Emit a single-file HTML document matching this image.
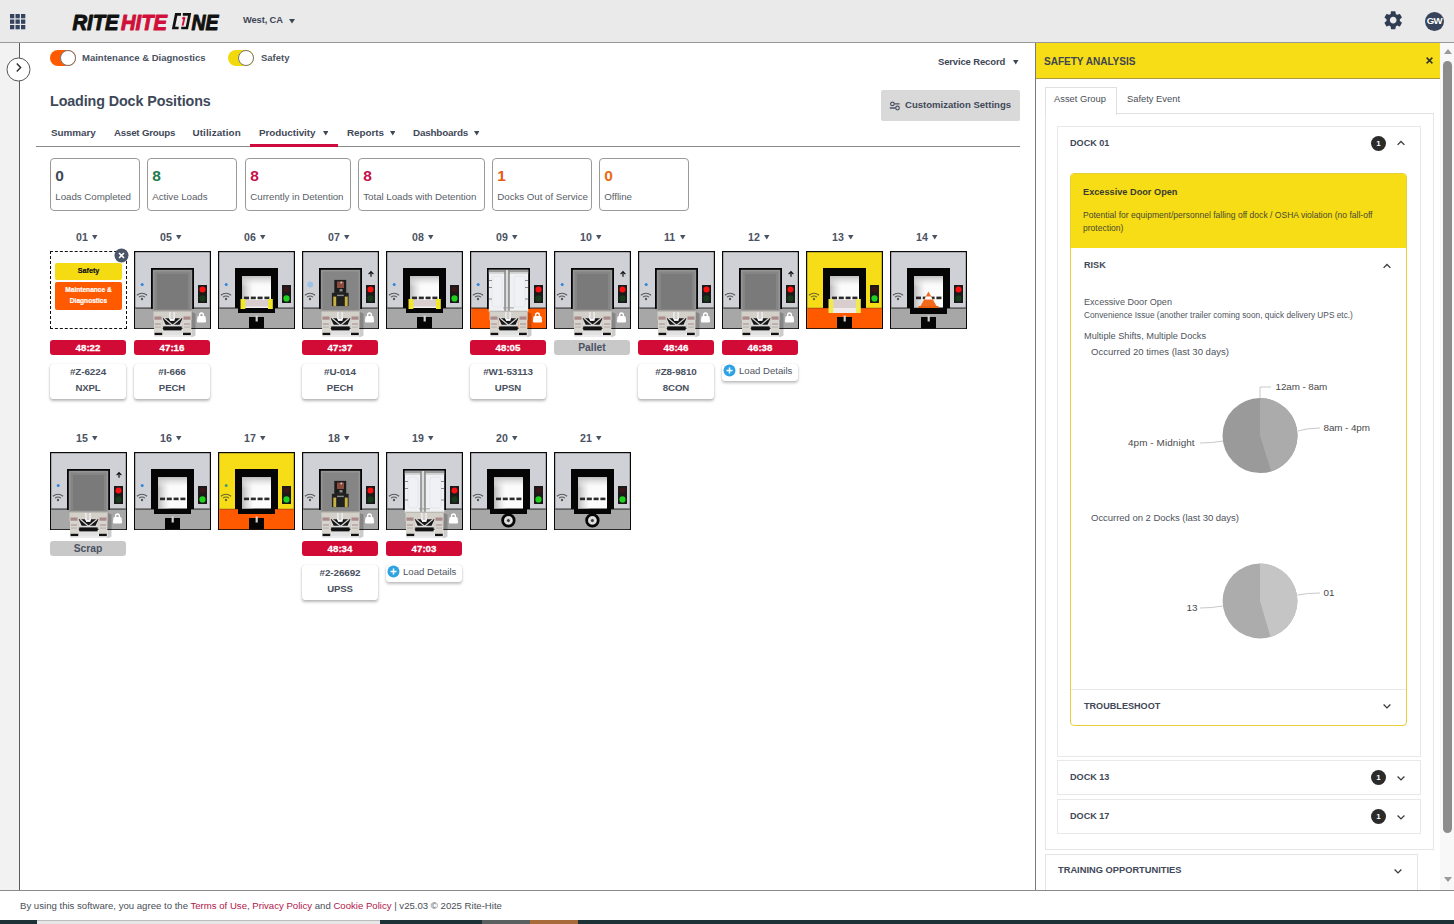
<!DOCTYPE html>
<html><head><meta charset="utf-8"><style>
html,body{margin:0;padding:0;width:1454px;height:924px;overflow:hidden;background:#fff;font-family:"Liberation Sans",sans-serif}
.a{position:absolute;box-sizing:content-box}
.t{position:absolute;white-space:nowrap;line-height:1.2}
svg.a{display:block}
</style></head><body>
<svg width="0" height="0" style="position:absolute"><defs>
<linearGradient id="gL" x1="0" y1="0" x2="1" y2="0"><stop offset="0" stop-color="#b8b8b8"/><stop offset="0.3" stop-color="#e8e8e8" stop-opacity="0.6"/><stop offset="0.45" stop-color="#fff" stop-opacity="0"/></linearGradient>
<linearGradient id="gT" x1="0" y1="0" x2="0" y2="1"><stop offset="0" stop-color="#bdbdbd"/><stop offset="0.2" stop-color="#e0e0e0" stop-opacity="0.5"/><stop offset="0.35" stop-color="#fff" stop-opacity="0"/></linearGradient>
</defs></svg>
<div class="a" style="left:0;top:0;width:1454px;height:42px;background:#eaeaea;border-bottom:1px solid #999"></div>
<svg class="a" style="left:10px;top:14px" width="16" height="16"><rect x="0.0" y="0.0" width="4.3" height="4.3" fill="#34445e"/><rect x="0.0" y="5.5" width="4.3" height="4.3" fill="#34445e"/><rect x="0.0" y="11.0" width="4.3" height="4.3" fill="#34445e"/><rect x="5.5" y="0.0" width="4.3" height="4.3" fill="#34445e"/><rect x="5.5" y="5.5" width="4.3" height="4.3" fill="#34445e"/><rect x="5.5" y="11.0" width="4.3" height="4.3" fill="#34445e"/><rect x="11.0" y="0.0" width="4.3" height="4.3" fill="#34445e"/><rect x="11.0" y="5.5" width="4.3" height="4.3" fill="#34445e"/><rect x="11.0" y="11.0" width="4.3" height="4.3" fill="#34445e"/></svg>
<svg class="a" style="left:72px;top:10.8px" width="150" height="21" viewBox="0 0 150 21">
<g stroke-width="1.1" stroke-linejoin="round">
<text x="0.5" y="18.6" font-family="Liberation Sans" font-weight="700" font-style="italic" font-size="22.5" fill="#111" stroke="#111" textLength="46" lengthAdjust="spacingAndGlyphs">RITE</text>
<text x="49" y="18.6" font-family="Liberation Sans" font-weight="700" font-style="italic" font-size="22.5" fill="#d0103a" stroke="#d0103a" textLength="46" lengthAdjust="spacingAndGlyphs">HITE</text>
<text x="119.5" y="18.6" font-family="Liberation Sans" font-weight="700" font-style="italic" font-size="22.5" fill="#111" stroke="#111" textLength="27" lengthAdjust="spacingAndGlyphs">NE</text>
</g>
<path d="M109 3.4H104.2L101.5 17H106.6M110.8 3.4H117.6L114.9 17H109.2" stroke="#111" stroke-width="2.7" fill="none" stroke-linejoin="miter"/>
<path d="M112.6 6.2L110.6 14.6M112.6 6.2L110.2 7.8" stroke="#d0103a" stroke-width="1.9" fill="none"/>
</svg>
<div class="t" style="left:243px;top:15.42px;font-size:9.3px;font-weight:700;color:#3d4656;letter-spacing:-0.1px;">West, CA</div>
<svg class="a" style="left:289px;top:19px" width="6" height="4.5"><path d="M0 0H6L3.0 4.5Z" fill="#3d4656"/></svg>
<svg class="a" style="left:1382.4px;top:8.8px" width="22.4" height="22.4" viewBox="0 0 24 24"><path fill="#2f3c52" d="M19.14 12.94c.04-.3.06-.61.06-.94 0-.32-.02-.64-.07-.94l2.03-1.58a.49.49 0 0 0 .12-.61l-1.92-3.32a.488.488 0 0 0-.59-.22l-2.39.96c-.5-.38-1.03-.7-1.62-.94l-.36-2.54a.484.484 0 0 0-.48-.41h-3.84c-.24 0-.43.17-.47.41l-.36 2.54c-.59.24-1.13.57-1.62.94l-2.39-.96c-.22-.08-.47 0-.59.22L2.74 8.87c-.12.21-.08.47.12.61l2.03 1.58c-.05.3-.09.63-.09.94s.02.64.07.94l-2.03 1.58a.49.49 0 0 0-.12.61l1.92 3.32c.12.22.37.29.59.22l2.39-.96c.5.38 1.03.7 1.62.94l.36 2.54c.05.24.24.41.48.41h3.84c.24 0 .44-.17.47-.41l.36-2.54c.59-.24 1.13-.56 1.62-.94l2.39.96c.22.08.47 0 .59-.22l1.92-3.32c.12-.22.07-.47-.12-.61l-2.01-1.58zM12 15.6c-1.98 0-3.6-1.62-3.6-3.6s1.62-3.6 3.6-3.6 3.6 1.62 3.6 3.6-1.62 3.6-3.6 3.6z"/></svg>
<div class="a" style="left:1425px;top:11.5px;width:19px;height:19px;border-radius:50%;background:#36435a;color:#fff;font-size:9.6px;font-weight:700;line-height:17px;text-align:center;letter-spacing:-0.7px;text-indent:-0.5px">GW</div>
<div class="a" style="left:0;top:43px;width:19px;height:847px;background:#f2f2f2;border-right:1px solid #5a5a5a"></div>
<svg class="a" style="left:6px;top:57px" width="25" height="25"><circle cx="12.5" cy="12.5" r="11.5" fill="#fff" stroke="#555" stroke-width="1"/><path d="M10.8 6.6L14.6 10.6L10.8 14.6" stroke="#333" stroke-width="1.5" fill="none"/></svg>
<div class="a" style="left:50px;top:50px;width:26px;height:16px;border-radius:8px;background:#ff5a00"></div>
<div class="a" style="left:60px;top:50px;width:14px;height:14px;border-radius:50%;background:#fff;border:1px solid #777"></div>
<div class="t" style="left:82px;top:52.30px;font-size:9.5px;font-weight:700;color:#4a5262;letter-spacing:0px;">Maintenance &amp; Diagnostics</div>
<div class="a" style="left:228px;top:50px;width:26px;height:16px;border-radius:8px;background:#f2d90c"></div>
<div class="a" style="left:238px;top:50px;width:14px;height:14px;border-radius:50%;background:#fff;border:1px solid #777"></div>
<div class="t" style="left:261px;top:52.30px;font-size:9.5px;font-weight:700;color:#4a5262;letter-spacing:0px;">Safety</div>
<div class="t" style="left:938px;top:56.30px;font-size:9.5px;font-weight:700;color:#3d4656;letter-spacing:-0.15px;">Service Record</div>
<svg class="a" style="left:1013px;top:60px" width="5.5" height="4.5"><path d="M0 0H5.5L2.75 4.5Z" fill="#3d4656"/></svg>
<div class="a" style="left:881px;top:90px;width:139px;height:31px;background:#d9d9d9;border-radius:2px"></div>
<svg class="a" style="left:888px;top:100px" width="13" height="11"><path d="M6.3 3.9H11.6M1.8 8H7.6" stroke="#4a5262" stroke-width="1.3"/><circle cx="4.4" cy="3.9" r="1.8" fill="none" stroke="#4a5262" stroke-width="1.2"/><circle cx="9.5" cy="8" r="1.8" fill="none" stroke="#4a5262" stroke-width="1.2"/></svg>
<div class="t" style="left:905px;top:99.27px;font-size:9.55px;font-weight:700;color:#3f4858;letter-spacing:0px;">Customization Settings</div>
<div class="t" style="left:50px;top:93.42px;font-size:14.3px;font-weight:700;color:#3e4859;letter-spacing:-0.1px;">Loading Dock Positions</div>
<div class="t" style="left:51px;top:127.06px;font-size:9.9px;font-weight:700;color:#3f4858;letter-spacing:-0.05px;">Summary</div>
<div class="t" style="left:114px;top:127.18px;font-size:9.7px;font-weight:700;color:#3f4858;letter-spacing:-0.2px;">Asset Groups</div>
<div class="t" style="left:192.5px;top:127.06px;font-size:9.9px;font-weight:700;color:#3f4858;letter-spacing:0.1px;">Utilization</div>
<div class="t" style="left:259px;top:127.06px;font-size:9.9px;font-weight:700;color:#3f4858;letter-spacing:-0.05px;">Productivity</div>
<div class="t" style="left:347px;top:127.06px;font-size:9.9px;font-weight:700;color:#3f4858;letter-spacing:-0.05px;">Reports</div>
<div class="t" style="left:413px;top:127.06px;font-size:9.9px;font-weight:700;color:#3f4858;letter-spacing:-0.2px;">Dashboards</div>
<svg class="a" style="left:322.5px;top:131px" width="5.5" height="4.5"><path d="M0 0H5.5L2.75 4.5Z" fill="#3f4858"/></svg>
<svg class="a" style="left:389.5px;top:131px" width="5.5" height="4.5"><path d="M0 0H5.5L2.75 4.5Z" fill="#3f4858"/></svg>
<svg class="a" style="left:473.5px;top:131px" width="5.5" height="4.5"><path d="M0 0H5.5L2.75 4.5Z" fill="#3f4858"/></svg>
<div class="a" style="left:36px;top:146px;width:984px;height:1px;background:#8a8a8a"></div>
<div class="a" style="left:250px;top:144px;width:88px;height:3px;background:#cf0a3c"></div>
<div class="a" style="left:50px;top:158px;width:88px;height:51px;border:1px solid #9a9a9a;border-radius:4px;background:#fff"></div>
<div class="t" style="left:55.3px;top:167.20px;font-size:15.5px;font-weight:700;color:#3e4859;letter-spacing:0px;">0</div>
<div class="t" style="left:55.3px;top:191.15px;font-size:9.75px;font-weight:400;color:#5a5f68;letter-spacing:-0.05px;">Loads Completed</div>
<div class="a" style="left:147px;top:158px;width:88px;height:51px;border:1px solid #9a9a9a;border-radius:4px;background:#fff"></div>
<div class="t" style="left:152.3px;top:167.20px;font-size:15.5px;font-weight:700;color:#1e7a4c;letter-spacing:0px;">8</div>
<div class="t" style="left:152.3px;top:191.15px;font-size:9.75px;font-weight:400;color:#5a5f68;letter-spacing:-0.05px;">Active Loads</div>
<div class="a" style="left:245px;top:158px;width:104px;height:51px;border:1px solid #9a9a9a;border-radius:4px;background:#fff"></div>
<div class="t" style="left:250.3px;top:167.20px;font-size:15.5px;font-weight:700;color:#c8104a;letter-spacing:0px;">8</div>
<div class="t" style="left:250.3px;top:191.15px;font-size:9.75px;font-weight:400;color:#5a5f68;letter-spacing:-0.05px;">Currently in Detention</div>
<div class="a" style="left:358px;top:158px;width:125px;height:51px;border:1px solid #9a9a9a;border-radius:4px;background:#fff"></div>
<div class="t" style="left:363.3px;top:167.20px;font-size:15.5px;font-weight:700;color:#c8104a;letter-spacing:0px;">8</div>
<div class="t" style="left:363.3px;top:191.15px;font-size:9.75px;font-weight:400;color:#5a5f68;letter-spacing:-0.05px;">Total Loads with Detention</div>
<div class="a" style="left:492px;top:158px;width:98px;height:51px;border:1px solid #9a9a9a;border-radius:4px;background:#fff"></div>
<div class="t" style="left:497.3px;top:167.20px;font-size:15.5px;font-weight:700;color:#e85a10;letter-spacing:0px;">1</div>
<div class="t" style="left:497.3px;top:191.15px;font-size:9.75px;font-weight:400;color:#5a5f68;letter-spacing:-0.05px;">Docks Out of Service</div>
<div class="a" style="left:599px;top:158px;width:88px;height:51px;border:1px solid #9a9a9a;border-radius:4px;background:#fff"></div>
<div class="t" style="left:604.3px;top:167.20px;font-size:15.5px;font-weight:700;color:#ea6a12;letter-spacing:0px;">0</div>
<div class="t" style="left:604.3px;top:191.15px;font-size:9.75px;font-weight:400;color:#5a5f68;letter-spacing:-0.05px;">Offline</div>
<div class="t" style="left:76.0px;top:230.64px;font-size:10.6px;font-weight:700;color:#4a5262;letter-spacing:0px;">01</div><svg class="a" style="left:92.0px;top:235px" width="5.5" height="4.5"><path d="M0 0H5.5L2.75 4.5Z" fill="#4a5262"/></svg>
<div class="t" style="left:160.0px;top:230.64px;font-size:10.6px;font-weight:700;color:#4a5262;letter-spacing:0px;">05</div><svg class="a" style="left:176.0px;top:235px" width="5.5" height="4.5"><path d="M0 0H5.5L2.75 4.5Z" fill="#4a5262"/></svg>
<div class="t" style="left:244.0px;top:230.64px;font-size:10.6px;font-weight:700;color:#4a5262;letter-spacing:0px;">06</div><svg class="a" style="left:260.0px;top:235px" width="5.5" height="4.5"><path d="M0 0H5.5L2.75 4.5Z" fill="#4a5262"/></svg>
<div class="t" style="left:328.0px;top:230.64px;font-size:10.6px;font-weight:700;color:#4a5262;letter-spacing:0px;">07</div><svg class="a" style="left:344.0px;top:235px" width="5.5" height="4.5"><path d="M0 0H5.5L2.75 4.5Z" fill="#4a5262"/></svg>
<div class="t" style="left:412.0px;top:230.64px;font-size:10.6px;font-weight:700;color:#4a5262;letter-spacing:0px;">08</div><svg class="a" style="left:428.0px;top:235px" width="5.5" height="4.5"><path d="M0 0H5.5L2.75 4.5Z" fill="#4a5262"/></svg>
<div class="t" style="left:496.0px;top:230.64px;font-size:10.6px;font-weight:700;color:#4a5262;letter-spacing:0px;">09</div><svg class="a" style="left:512.0px;top:235px" width="5.5" height="4.5"><path d="M0 0H5.5L2.75 4.5Z" fill="#4a5262"/></svg>
<div class="t" style="left:580.0px;top:230.64px;font-size:10.6px;font-weight:700;color:#4a5262;letter-spacing:0px;">10</div><svg class="a" style="left:596.0px;top:235px" width="5.5" height="4.5"><path d="M0 0H5.5L2.75 4.5Z" fill="#4a5262"/></svg>
<div class="t" style="left:664.0px;top:230.64px;font-size:10.6px;font-weight:700;color:#4a5262;letter-spacing:0px;">11</div><svg class="a" style="left:680.0px;top:235px" width="5.5" height="4.5"><path d="M0 0H5.5L2.75 4.5Z" fill="#4a5262"/></svg>
<div class="t" style="left:748.0px;top:230.64px;font-size:10.6px;font-weight:700;color:#4a5262;letter-spacing:0px;">12</div><svg class="a" style="left:764.0px;top:235px" width="5.5" height="4.5"><path d="M0 0H5.5L2.75 4.5Z" fill="#4a5262"/></svg>
<div class="t" style="left:832.0px;top:230.64px;font-size:10.6px;font-weight:700;color:#4a5262;letter-spacing:0px;">13</div><svg class="a" style="left:848.0px;top:235px" width="5.5" height="4.5"><path d="M0 0H5.5L2.75 4.5Z" fill="#4a5262"/></svg>
<div class="t" style="left:916.0px;top:230.64px;font-size:10.6px;font-weight:700;color:#4a5262;letter-spacing:0px;">14</div><svg class="a" style="left:932.0px;top:235px" width="5.5" height="4.5"><path d="M0 0H5.5L2.75 4.5Z" fill="#4a5262"/></svg>
<div class="t" style="left:76.0px;top:431.64px;font-size:10.6px;font-weight:700;color:#4a5262;letter-spacing:0px;">15</div><svg class="a" style="left:92.0px;top:436px" width="5.5" height="4.5"><path d="M0 0H5.5L2.75 4.5Z" fill="#4a5262"/></svg>
<div class="t" style="left:160.0px;top:431.64px;font-size:10.6px;font-weight:700;color:#4a5262;letter-spacing:0px;">16</div><svg class="a" style="left:176.0px;top:436px" width="5.5" height="4.5"><path d="M0 0H5.5L2.75 4.5Z" fill="#4a5262"/></svg>
<div class="t" style="left:244.0px;top:431.64px;font-size:10.6px;font-weight:700;color:#4a5262;letter-spacing:0px;">17</div><svg class="a" style="left:260.0px;top:436px" width="5.5" height="4.5"><path d="M0 0H5.5L2.75 4.5Z" fill="#4a5262"/></svg>
<div class="t" style="left:328.0px;top:431.64px;font-size:10.6px;font-weight:700;color:#4a5262;letter-spacing:0px;">18</div><svg class="a" style="left:344.0px;top:436px" width="5.5" height="4.5"><path d="M0 0H5.5L2.75 4.5Z" fill="#4a5262"/></svg>
<div class="t" style="left:412.0px;top:431.64px;font-size:10.6px;font-weight:700;color:#4a5262;letter-spacing:0px;">19</div><svg class="a" style="left:428.0px;top:436px" width="5.5" height="4.5"><path d="M0 0H5.5L2.75 4.5Z" fill="#4a5262"/></svg>
<div class="t" style="left:496.0px;top:431.64px;font-size:10.6px;font-weight:700;color:#4a5262;letter-spacing:0px;">20</div><svg class="a" style="left:512.0px;top:436px" width="5.5" height="4.5"><path d="M0 0H5.5L2.75 4.5Z" fill="#4a5262"/></svg>
<div class="t" style="left:580.0px;top:431.64px;font-size:10.6px;font-weight:700;color:#4a5262;letter-spacing:0px;">21</div><svg class="a" style="left:596.0px;top:436px" width="5.5" height="4.5"><path d="M0 0H5.5L2.75 4.5Z" fill="#4a5262"/></svg>
<div class="a" style="left:50px;top:251px;width:75px;height:76px;border:1.3px dashed #111;background:#fff"></div>
<div class="a" style="left:55px;top:263px;width:67px;height:17px;border-radius:2px;background:#f5dc12;color:#111;font-size:7.2px;font-weight:700;text-align:center;line-height:16px;-webkit-text-stroke:0.2px #111">Safety</div>
<div class="a" style="left:55px;top:282px;width:67px;height:28px;border-radius:2px;background:#ff5a00;color:#fff;font-size:6.6px;font-weight:700;text-align:center;line-height:11px;padding-top:2.3px;box-sizing:border-box;-webkit-text-stroke:0.2px #fff">Maintenance &amp;<br>Diagnostics</div>
<svg class="a" style="left:114px;top:248px" width="15" height="15"><circle cx="7.5" cy="7.5" r="7" fill="#4b5568"/><path d="M5 5L10 10M10 5L5 10" stroke="#fff" stroke-width="1.6"/></svg>
<svg class="a" style="left:134px;top:251px;overflow:visible" width="77" height="78" viewBox="0 0 77 78"><rect x="0.6" y="0.6" width="75.8" height="76.8" fill="#cfd1d6" stroke="#0a0a0a" stroke-width="1.2"/><rect x="1.2" y="57" width="74.6" height="20.2" fill="#a7a7a7"/><rect x="1.2" y="56.5" width="74.6" height="1.1" fill="#1a1a1a" opacity="0.85"/><circle cx="8.2" cy="33.5" r="1.5" fill="#2f86dd"/><path d="M2.9 44.3 Q8 40.2 13.1 44.3" stroke="#5a5a5a" stroke-width="1.1" fill="none"/><path d="M5 46.2 Q8 43.7 11 46.2" stroke="#5a5a5a" stroke-width="1.1" fill="none"/><circle cx="8" cy="48" r="1.2" fill="#5a5a5a"/><rect x="64" y="34" width="9" height="18" fill="#1a1a1a"/><circle cx="68.5" cy="38.6" r="3" fill="#ff1010"/><circle cx="68.5" cy="47.4" r="3.1" fill="#173a1a"/><path d="M65.6 65.5V64.3Q65.6 62 67.5 62Q69.4 62 69.4 64.3V65.5" stroke="#fff" stroke-width="1.4" fill="none"/><path d="M64.6 65H70.4Q71.4 65 71.6 66.2L72.1 70Q72.2 71.6 70.6 71.6H64.4Q62.8 71.6 62.9 70L63.4 66.2Q63.6 65 64.6 65Z" fill="#fff"/><rect x="17" y="17" width="43" height="41" fill="#050505"/><rect x="18.8" y="18.8" width="39.4" height="42" fill="#959595"/><rect x="20.5" y="20.5" width="36" height="39" fill="#858585"/><rect x="23" y="23" width="31" height="35" fill="#7a7a7a"/><rect x="19.5" y="59.8" width="38.2" height="9.5" fill="#d3cfc9"/><rect x="19.5" y="59.8" width="38.2" height="1.2" fill="#bdbab5"/><rect x="20.5" y="65.5" width="7" height="3.2" fill="#9e7474" opacity="0.75"/><rect x="49.5" y="65.5" width="7" height="3.2" fill="#9e7474" opacity="0.75"/><rect x="20" y="69" width="8.7" height="13" fill="#d8d4ce"/><rect x="48.5" y="69" width="8.8" height="13" fill="#d8d4ce"/><rect x="21" y="72" width="6" height="2" fill="#b0a0a0" opacity="0.7"/><rect x="50" y="72" width="6" height="2" fill="#b0a0a0" opacity="0.7"/><rect x="21" y="75.5" width="6" height="1.2" fill="#a8a0a0" opacity="0.6"/><rect x="50" y="75.5" width="6" height="1.2" fill="#a8a0a0" opacity="0.6"/><rect x="28.7" y="79.4" width="19.8" height="4.5" fill="#bdbdbd" opacity="0.45"/><rect x="28.7" y="67" width="19.8" height="9" fill="#dadada"/><path d="M28.7 67.2H48.5L45.5 73.8H31.7Z" fill="#161616"/><path d="M30.2 67.2L38.6 74.2L47 67.2" stroke="#d8d8d8" stroke-width="1.2" fill="none"/><rect x="29.2" y="75.4" width="18.4" height="4" fill="#121212"/><rect x="35" y="61" width="1.7" height="7.5" fill="#eaeaea"/><rect x="39.3" y="61" width="1.7" height="7.5" fill="#eaeaea"/><rect x="36" y="67.3" width="4.5" height="2.6" fill="#fbfbfb"/><rect x="20.5" y="81.8" width="7.8" height="2.3" fill="#111"/><rect x="49" y="81.8" width="7.8" height="2.3" fill="#111"/><path d="M57.7 61L61.5 62.5V84.5L57.5 86.5Z" fill="#000" opacity="0.2"/><rect x="20" y="84" width="38" height="2" fill="#000" opacity="0.08"/></svg>
<svg class="a" style="left:218px;top:251px;overflow:visible" width="77" height="78" viewBox="0 0 77 78"><rect x="0.6" y="0.6" width="75.8" height="76.8" fill="#cfd1d6" stroke="#0a0a0a" stroke-width="1.2"/><rect x="1.2" y="57" width="74.6" height="20.2" fill="#a7a7a7"/><rect x="1.2" y="56.5" width="74.6" height="1.1" fill="#1a1a1a" opacity="0.85"/><circle cx="8.2" cy="33.5" r="1.5" fill="#2f86dd"/><path d="M2.9 44.3 Q8 40.2 13.1 44.3" stroke="#5a5a5a" stroke-width="1.1" fill="none"/><path d="M5 46.2 Q8 43.7 11 46.2" stroke="#5a5a5a" stroke-width="1.1" fill="none"/><circle cx="8" cy="48" r="1.2" fill="#5a5a5a"/><rect x="64" y="34" width="9" height="18" fill="#1a1a1a"/><circle cx="68.5" cy="38.6" r="3" fill="#3a1515"/><circle cx="68.5" cy="47.4" r="3.1" fill="#1ed21e"/><path d="M17 17H60V57H57V62H20V57H17Z" fill="#050505"/><rect x="24" y="25" width="29" height="31.5" fill="#fbfbfb"/><rect x="24" y="25" width="29" height="31.5" fill="url(#gL)"/><rect x="24" y="25" width="29" height="31.5" fill="url(#gT)"/><rect x="26" y="45.6" width="5" height="2.6" fill="#2a2a2a"/><rect x="32.8" y="45.6" width="5" height="2.6" fill="#2a2a2a"/><rect x="39.6" y="45.6" width="5" height="2.6" fill="#2a2a2a"/><rect x="46.4" y="45.6" width="5" height="2.6" fill="#2a2a2a"/><rect x="25" y="49" width="28" height="7.5" fill="#d9cdcd"/><rect x="25" y="55.5" width="28" height="1.5" fill="#f4eeee"/><rect x="22.5" y="48" width="4.8" height="10" fill="#f2e62a"/><rect x="50" y="48" width="4.8" height="10" fill="#f2e62a"/><rect x="31" y="66" width="15" height="11.5" fill="#050505"/><rect x="37.6" y="64.5" width="2.2" height="6" fill="#cfcfcf"/></svg>
<svg class="a" style="left:302px;top:251px;overflow:visible" width="77" height="78" viewBox="0 0 77 78"><rect x="0.6" y="0.6" width="75.8" height="76.8" fill="#cfd1d6" stroke="#0a0a0a" stroke-width="1.2"/><rect x="1.2" y="57" width="74.6" height="20.2" fill="#a7a7a7"/><rect x="1.2" y="56.5" width="74.6" height="1.1" fill="#1a1a1a" opacity="0.85"/><circle cx="8.2" cy="33.5" r="3" fill="#9fc3e6"/><path d="M2.9 44.3 Q8 40.2 13.1 44.3" stroke="#5a5a5a" stroke-width="1.1" fill="none"/><path d="M5 46.2 Q8 43.7 11 46.2" stroke="#5a5a5a" stroke-width="1.1" fill="none"/><circle cx="8" cy="48" r="1.2" fill="#5a5a5a"/><rect x="64" y="34" width="9" height="18" fill="#1a1a1a"/><circle cx="68.5" cy="38.6" r="3" fill="#ff1010"/><circle cx="68.5" cy="47.4" r="3.1" fill="#173a1a"/><path d="M69 25.8V20.6M66.6 23.2L69 20.6L71.4 23.2" stroke="#111" stroke-width="1.2" fill="none"/><path d="M65.6 65.5V64.3Q65.6 62 67.5 62Q69.4 62 69.4 64.3V65.5" stroke="#fff" stroke-width="1.4" fill="none"/><path d="M64.6 65H70.4Q71.4 65 71.6 66.2L72.1 70Q72.2 71.6 70.6 71.6H64.4Q62.8 71.6 62.9 70L63.4 66.2Q63.6 65 64.6 65Z" fill="#fff"/><rect x="17" y="17" width="43" height="41" fill="#050505"/><rect x="18.8" y="18.8" width="39.4" height="42" fill="#959595"/><rect x="20.5" y="20.5" width="36" height="39" fill="#858585"/><rect x="23" y="23" width="31" height="35" fill="#7a7a7a"/><rect x="23" y="23" width="31" height="35" fill="#858585"/><rect x="32.3" y="28.9" width="11.9" height="13" fill="#1c1c1c"/><rect x="35" y="30.5" width="7" height="6.5" fill="#8a4a3c"/><circle cx="39.3" cy="31.5" r="1" fill="#d8c8c0"/><rect x="37.5" y="38" width="3" height="2.5" fill="#8a8a80"/><rect x="29.9" y="41.8" width="16.7" height="13.3" fill="#202020"/><rect x="35" y="43.7" width="6.8" height="1.4" fill="#8a8a8a"/><rect x="31.3" y="45.6" width="2.9" height="9.5" fill="#c8b040"/><rect x="42.8" y="45.6" width="2.9" height="9.5" fill="#c8b040"/><rect x="19.5" y="59.8" width="38.2" height="9.5" fill="#d3cfc9"/><rect x="19.5" y="59.8" width="38.2" height="1.2" fill="#bdbab5"/><rect x="20.5" y="65.5" width="7" height="3.2" fill="#9e7474" opacity="0.75"/><rect x="49.5" y="65.5" width="7" height="3.2" fill="#9e7474" opacity="0.75"/><rect x="20" y="69" width="8.7" height="13" fill="#d8d4ce"/><rect x="48.5" y="69" width="8.8" height="13" fill="#d8d4ce"/><rect x="21" y="72" width="6" height="2" fill="#b0a0a0" opacity="0.7"/><rect x="50" y="72" width="6" height="2" fill="#b0a0a0" opacity="0.7"/><rect x="21" y="75.5" width="6" height="1.2" fill="#a8a0a0" opacity="0.6"/><rect x="50" y="75.5" width="6" height="1.2" fill="#a8a0a0" opacity="0.6"/><rect x="28.7" y="79.4" width="19.8" height="4.5" fill="#bdbdbd" opacity="0.45"/><rect x="28.7" y="67" width="19.8" height="9" fill="#dadada"/><path d="M28.7 67.2H48.5L45.5 73.8H31.7Z" fill="#161616"/><path d="M30.2 67.2L38.6 74.2L47 67.2" stroke="#d8d8d8" stroke-width="1.2" fill="none"/><rect x="29.2" y="75.4" width="18.4" height="4" fill="#121212"/><rect x="35" y="61" width="1.7" height="7.5" fill="#eaeaea"/><rect x="39.3" y="61" width="1.7" height="7.5" fill="#eaeaea"/><rect x="36" y="67.3" width="4.5" height="2.6" fill="#fbfbfb"/><rect x="20.5" y="81.8" width="7.8" height="2.3" fill="#111"/><rect x="49" y="81.8" width="7.8" height="2.3" fill="#111"/><path d="M57.7 61L61.5 62.5V84.5L57.5 86.5Z" fill="#000" opacity="0.2"/><rect x="20" y="84" width="38" height="2" fill="#000" opacity="0.08"/></svg>
<svg class="a" style="left:386px;top:251px;overflow:visible" width="77" height="78" viewBox="0 0 77 78"><rect x="0.6" y="0.6" width="75.8" height="76.8" fill="#cfd1d6" stroke="#0a0a0a" stroke-width="1.2"/><rect x="1.2" y="57" width="74.6" height="20.2" fill="#a7a7a7"/><rect x="1.2" y="56.5" width="74.6" height="1.1" fill="#1a1a1a" opacity="0.85"/><circle cx="8.2" cy="33.5" r="1.5" fill="#2f86dd"/><path d="M2.9 44.3 Q8 40.2 13.1 44.3" stroke="#5a5a5a" stroke-width="1.1" fill="none"/><path d="M5 46.2 Q8 43.7 11 46.2" stroke="#5a5a5a" stroke-width="1.1" fill="none"/><circle cx="8" cy="48" r="1.2" fill="#5a5a5a"/><rect x="64" y="34" width="9" height="18" fill="#1a1a1a"/><circle cx="68.5" cy="38.6" r="3" fill="#3a1515"/><circle cx="68.5" cy="47.4" r="3.1" fill="#1ed21e"/><path d="M17 17H60V57H57V62H20V57H17Z" fill="#050505"/><rect x="24" y="25" width="29" height="31.5" fill="#fbfbfb"/><rect x="24" y="25" width="29" height="31.5" fill="url(#gL)"/><rect x="24" y="25" width="29" height="31.5" fill="url(#gT)"/><rect x="26" y="45.6" width="5" height="2.6" fill="#2a2a2a"/><rect x="32.8" y="45.6" width="5" height="2.6" fill="#2a2a2a"/><rect x="39.6" y="45.6" width="5" height="2.6" fill="#2a2a2a"/><rect x="46.4" y="45.6" width="5" height="2.6" fill="#2a2a2a"/><rect x="25" y="49" width="28" height="7.5" fill="#d9cdcd"/><rect x="25" y="55.5" width="28" height="1.5" fill="#f4eeee"/><rect x="22.5" y="48" width="4.8" height="10" fill="#f2e62a"/><rect x="50" y="48" width="4.8" height="10" fill="#f2e62a"/><rect x="31" y="66" width="15" height="11.5" fill="#050505"/><rect x="37.6" y="64.5" width="2.2" height="6" fill="#cfcfcf"/></svg>
<svg class="a" style="left:470px;top:251px;overflow:visible" width="77" height="78" viewBox="0 0 77 78"><rect x="0.6" y="0.6" width="75.8" height="76.8" fill="#cfd1d6" stroke="#0a0a0a" stroke-width="1.2"/><rect x="1.2" y="57" width="74.6" height="20.2" fill="#ff5a00"/><rect x="1.2" y="56.5" width="74.6" height="1.1" fill="#1a1a1a" opacity="0.85"/><circle cx="8.2" cy="33.5" r="1.5" fill="#2f86dd"/><path d="M2.9 44.3 Q8 40.2 13.1 44.3" stroke="#5a5a5a" stroke-width="1.1" fill="none"/><path d="M5 46.2 Q8 43.7 11 46.2" stroke="#5a5a5a" stroke-width="1.1" fill="none"/><circle cx="8" cy="48" r="1.2" fill="#5a5a5a"/><rect x="64" y="34" width="9" height="18" fill="#1a1a1a"/><circle cx="68.5" cy="38.6" r="3" fill="#ff1010"/><circle cx="68.5" cy="47.4" r="3.1" fill="#173a1a"/><path d="M65.6 65.5V64.3Q65.6 62 67.5 62Q69.4 62 69.4 64.3V65.5" stroke="#fff" stroke-width="1.4" fill="none"/><path d="M64.6 65H70.4Q71.4 65 71.6 66.2L72.1 70Q72.2 71.6 70.6 71.6H64.4Q62.8 71.6 62.9 70L63.4 66.2Q63.6 65 64.6 65Z" fill="#fff"/><rect x="17" y="17" width="43" height="41" fill="#050505"/><rect x="18.8" y="18.8" width="39.4" height="42" fill="#eff1f4"/><rect x="18.8" y="18.8" width="39.4" height="2.5" fill="#9a9a9a"/><rect x="18.8" y="21.3" width="39.4" height="1.5" fill="#cfcfcf"/><rect x="22" y="25" width="10" height="31" rx="3" fill="none" stroke="#e2e4e8" stroke-width="0.8"/><rect x="44" y="25" width="11" height="31" rx="3" fill="none" stroke="#e2e4e8" stroke-width="0.8"/><rect x="34.2" y="19" width="1.7" height="46" fill="#8c8c8c"/><rect x="35.9" y="19" width="2.2" height="46" fill="#dcdcdc"/><rect x="38.1" y="19" width="1.7" height="46" fill="#8c8c8c"/><rect x="19" y="29" width="3" height="1" fill="#8a8a8a"/><rect x="55" y="29" width="3" height="1" fill="#8a8a8a"/><rect x="19" y="36" width="3" height="1" fill="#8a8a8a"/><rect x="55" y="36" width="3" height="1" fill="#8a8a8a"/><rect x="19" y="47.5" width="3" height="1" fill="#8a8a8a"/><rect x="55" y="47.5" width="3" height="1" fill="#8a8a8a"/><rect x="33" y="56" width="11" height="1.5" fill="#9a9a9a" opacity="0.6"/><rect x="19.5" y="59.8" width="38.2" height="9.5" fill="#d3cfc9"/><rect x="19.5" y="59.8" width="38.2" height="1.2" fill="#bdbab5"/><rect x="20.5" y="65.5" width="7" height="3.2" fill="#9e7474" opacity="0.75"/><rect x="49.5" y="65.5" width="7" height="3.2" fill="#9e7474" opacity="0.75"/><rect x="20" y="69" width="8.7" height="13" fill="#d8d4ce"/><rect x="48.5" y="69" width="8.8" height="13" fill="#d8d4ce"/><rect x="21" y="72" width="6" height="2" fill="#b0a0a0" opacity="0.7"/><rect x="50" y="72" width="6" height="2" fill="#b0a0a0" opacity="0.7"/><rect x="21" y="75.5" width="6" height="1.2" fill="#a8a0a0" opacity="0.6"/><rect x="50" y="75.5" width="6" height="1.2" fill="#a8a0a0" opacity="0.6"/><rect x="28.7" y="79.4" width="19.8" height="4.5" fill="#bdbdbd" opacity="0.45"/><rect x="28.7" y="67" width="19.8" height="9" fill="#dadada"/><path d="M28.7 67.2H48.5L45.5 73.8H31.7Z" fill="#161616"/><path d="M30.2 67.2L38.6 74.2L47 67.2" stroke="#d8d8d8" stroke-width="1.2" fill="none"/><rect x="29.2" y="75.4" width="18.4" height="4" fill="#121212"/><rect x="35" y="61" width="1.7" height="7.5" fill="#eaeaea"/><rect x="39.3" y="61" width="1.7" height="7.5" fill="#eaeaea"/><rect x="36" y="67.3" width="4.5" height="2.6" fill="#fbfbfb"/><rect x="20.5" y="81.8" width="7.8" height="2.3" fill="#111"/><rect x="49" y="81.8" width="7.8" height="2.3" fill="#111"/><path d="M57.7 61L61.5 62.5V84.5L57.5 86.5Z" fill="#000" opacity="0.2"/><rect x="20" y="84" width="38" height="2" fill="#000" opacity="0.08"/></svg>
<svg class="a" style="left:554px;top:251px;overflow:visible" width="77" height="78" viewBox="0 0 77 78"><rect x="0.6" y="0.6" width="75.8" height="76.8" fill="#cfd1d6" stroke="#0a0a0a" stroke-width="1.2"/><rect x="1.2" y="57" width="74.6" height="20.2" fill="#a7a7a7"/><rect x="1.2" y="56.5" width="74.6" height="1.1" fill="#1a1a1a" opacity="0.85"/><circle cx="8.2" cy="33.5" r="1.5" fill="#2f86dd"/><path d="M2.9 44.3 Q8 40.2 13.1 44.3" stroke="#5a5a5a" stroke-width="1.1" fill="none"/><path d="M5 46.2 Q8 43.7 11 46.2" stroke="#5a5a5a" stroke-width="1.1" fill="none"/><circle cx="8" cy="48" r="1.2" fill="#5a5a5a"/><rect x="64" y="34" width="9" height="18" fill="#1a1a1a"/><circle cx="68.5" cy="38.6" r="3" fill="#ff1010"/><circle cx="68.5" cy="47.4" r="3.1" fill="#173a1a"/><path d="M69 25.8V20.6M66.6 23.2L69 20.6L71.4 23.2" stroke="#111" stroke-width="1.2" fill="none"/><path d="M65.6 65.5V64.3Q65.6 62 67.5 62Q69.4 62 69.4 64.3V65.5" stroke="#fff" stroke-width="1.4" fill="none"/><path d="M64.6 65H70.4Q71.4 65 71.6 66.2L72.1 70Q72.2 71.6 70.6 71.6H64.4Q62.8 71.6 62.9 70L63.4 66.2Q63.6 65 64.6 65Z" fill="#fff"/><rect x="17" y="17" width="43" height="41" fill="#050505"/><rect x="18.8" y="18.8" width="39.4" height="42" fill="#959595"/><rect x="20.5" y="20.5" width="36" height="39" fill="#858585"/><rect x="23" y="23" width="31" height="35" fill="#7a7a7a"/><rect x="19.5" y="59.8" width="38.2" height="9.5" fill="#d3cfc9"/><rect x="19.5" y="59.8" width="38.2" height="1.2" fill="#bdbab5"/><rect x="20.5" y="65.5" width="7" height="3.2" fill="#9e7474" opacity="0.75"/><rect x="49.5" y="65.5" width="7" height="3.2" fill="#9e7474" opacity="0.75"/><rect x="20" y="69" width="8.7" height="13" fill="#d8d4ce"/><rect x="48.5" y="69" width="8.8" height="13" fill="#d8d4ce"/><rect x="21" y="72" width="6" height="2" fill="#b0a0a0" opacity="0.7"/><rect x="50" y="72" width="6" height="2" fill="#b0a0a0" opacity="0.7"/><rect x="21" y="75.5" width="6" height="1.2" fill="#a8a0a0" opacity="0.6"/><rect x="50" y="75.5" width="6" height="1.2" fill="#a8a0a0" opacity="0.6"/><rect x="28.7" y="79.4" width="19.8" height="4.5" fill="#bdbdbd" opacity="0.45"/><rect x="28.7" y="67" width="19.8" height="9" fill="#dadada"/><path d="M28.7 67.2H48.5L45.5 73.8H31.7Z" fill="#161616"/><path d="M30.2 67.2L38.6 74.2L47 67.2" stroke="#d8d8d8" stroke-width="1.2" fill="none"/><rect x="29.2" y="75.4" width="18.4" height="4" fill="#121212"/><rect x="35" y="61" width="1.7" height="7.5" fill="#eaeaea"/><rect x="39.3" y="61" width="1.7" height="7.5" fill="#eaeaea"/><rect x="36" y="67.3" width="4.5" height="2.6" fill="#fbfbfb"/><rect x="20.5" y="81.8" width="7.8" height="2.3" fill="#111"/><rect x="49" y="81.8" width="7.8" height="2.3" fill="#111"/><path d="M57.7 61L61.5 62.5V84.5L57.5 86.5Z" fill="#000" opacity="0.2"/><rect x="20" y="84" width="38" height="2" fill="#000" opacity="0.08"/></svg>
<svg class="a" style="left:638px;top:251px;overflow:visible" width="77" height="78" viewBox="0 0 77 78"><rect x="0.6" y="0.6" width="75.8" height="76.8" fill="#cfd1d6" stroke="#0a0a0a" stroke-width="1.2"/><rect x="1.2" y="57" width="74.6" height="20.2" fill="#a7a7a7"/><rect x="1.2" y="56.5" width="74.6" height="1.1" fill="#1a1a1a" opacity="0.85"/><circle cx="8.2" cy="33.5" r="1.5" fill="#2f86dd"/><path d="M2.9 44.3 Q8 40.2 13.1 44.3" stroke="#5a5a5a" stroke-width="1.1" fill="none"/><path d="M5 46.2 Q8 43.7 11 46.2" stroke="#5a5a5a" stroke-width="1.1" fill="none"/><circle cx="8" cy="48" r="1.2" fill="#5a5a5a"/><rect x="64" y="34" width="9" height="18" fill="#1a1a1a"/><circle cx="68.5" cy="38.6" r="3" fill="#ff1010"/><circle cx="68.5" cy="47.4" r="3.1" fill="#173a1a"/><path d="M65.6 65.5V64.3Q65.6 62 67.5 62Q69.4 62 69.4 64.3V65.5" stroke="#fff" stroke-width="1.4" fill="none"/><path d="M64.6 65H70.4Q71.4 65 71.6 66.2L72.1 70Q72.2 71.6 70.6 71.6H64.4Q62.8 71.6 62.9 70L63.4 66.2Q63.6 65 64.6 65Z" fill="#fff"/><rect x="17" y="17" width="43" height="41" fill="#050505"/><rect x="18.8" y="18.8" width="39.4" height="42" fill="#959595"/><rect x="20.5" y="20.5" width="36" height="39" fill="#858585"/><rect x="23" y="23" width="31" height="35" fill="#7a7a7a"/><rect x="19.5" y="59.8" width="38.2" height="9.5" fill="#d3cfc9"/><rect x="19.5" y="59.8" width="38.2" height="1.2" fill="#bdbab5"/><rect x="20.5" y="65.5" width="7" height="3.2" fill="#9e7474" opacity="0.75"/><rect x="49.5" y="65.5" width="7" height="3.2" fill="#9e7474" opacity="0.75"/><rect x="20" y="69" width="8.7" height="13" fill="#d8d4ce"/><rect x="48.5" y="69" width="8.8" height="13" fill="#d8d4ce"/><rect x="21" y="72" width="6" height="2" fill="#b0a0a0" opacity="0.7"/><rect x="50" y="72" width="6" height="2" fill="#b0a0a0" opacity="0.7"/><rect x="21" y="75.5" width="6" height="1.2" fill="#a8a0a0" opacity="0.6"/><rect x="50" y="75.5" width="6" height="1.2" fill="#a8a0a0" opacity="0.6"/><rect x="28.7" y="79.4" width="19.8" height="4.5" fill="#bdbdbd" opacity="0.45"/><rect x="28.7" y="67" width="19.8" height="9" fill="#dadada"/><path d="M28.7 67.2H48.5L45.5 73.8H31.7Z" fill="#161616"/><path d="M30.2 67.2L38.6 74.2L47 67.2" stroke="#d8d8d8" stroke-width="1.2" fill="none"/><rect x="29.2" y="75.4" width="18.4" height="4" fill="#121212"/><rect x="35" y="61" width="1.7" height="7.5" fill="#eaeaea"/><rect x="39.3" y="61" width="1.7" height="7.5" fill="#eaeaea"/><rect x="36" y="67.3" width="4.5" height="2.6" fill="#fbfbfb"/><rect x="20.5" y="81.8" width="7.8" height="2.3" fill="#111"/><rect x="49" y="81.8" width="7.8" height="2.3" fill="#111"/><path d="M57.7 61L61.5 62.5V84.5L57.5 86.5Z" fill="#000" opacity="0.2"/><rect x="20" y="84" width="38" height="2" fill="#000" opacity="0.08"/></svg>
<svg class="a" style="left:722px;top:251px;overflow:visible" width="77" height="78" viewBox="0 0 77 78"><rect x="0.6" y="0.6" width="75.8" height="76.8" fill="#cfd1d6" stroke="#0a0a0a" stroke-width="1.2"/><rect x="1.2" y="57" width="74.6" height="20.2" fill="#a7a7a7"/><rect x="1.2" y="56.5" width="74.6" height="1.1" fill="#1a1a1a" opacity="0.85"/><path d="M2.9 44.3 Q8 40.2 13.1 44.3" stroke="#5a5a5a" stroke-width="1.1" fill="none"/><path d="M5 46.2 Q8 43.7 11 46.2" stroke="#5a5a5a" stroke-width="1.1" fill="none"/><circle cx="8" cy="48" r="1.2" fill="#5a5a5a"/><rect x="64" y="34" width="9" height="18" fill="#1a1a1a"/><circle cx="68.5" cy="38.6" r="3" fill="#ff1010"/><circle cx="68.5" cy="47.4" r="3.1" fill="#173a1a"/><path d="M69 25.8V20.6M66.6 23.2L69 20.6L71.4 23.2" stroke="#111" stroke-width="1.2" fill="none"/><path d="M65.6 65.5V64.3Q65.6 62 67.5 62Q69.4 62 69.4 64.3V65.5" stroke="#fff" stroke-width="1.4" fill="none"/><path d="M64.6 65H70.4Q71.4 65 71.6 66.2L72.1 70Q72.2 71.6 70.6 71.6H64.4Q62.8 71.6 62.9 70L63.4 66.2Q63.6 65 64.6 65Z" fill="#fff"/><rect x="17" y="17" width="43" height="41" fill="#050505"/><rect x="18.8" y="18.8" width="39.4" height="42" fill="#959595"/><rect x="20.5" y="20.5" width="36" height="39" fill="#858585"/><rect x="23" y="23" width="31" height="35" fill="#7a7a7a"/><rect x="19.5" y="59.8" width="38.2" height="9.5" fill="#d3cfc9"/><rect x="19.5" y="59.8" width="38.2" height="1.2" fill="#bdbab5"/><rect x="20.5" y="65.5" width="7" height="3.2" fill="#9e7474" opacity="0.75"/><rect x="49.5" y="65.5" width="7" height="3.2" fill="#9e7474" opacity="0.75"/><rect x="20" y="69" width="8.7" height="13" fill="#d8d4ce"/><rect x="48.5" y="69" width="8.8" height="13" fill="#d8d4ce"/><rect x="21" y="72" width="6" height="2" fill="#b0a0a0" opacity="0.7"/><rect x="50" y="72" width="6" height="2" fill="#b0a0a0" opacity="0.7"/><rect x="21" y="75.5" width="6" height="1.2" fill="#a8a0a0" opacity="0.6"/><rect x="50" y="75.5" width="6" height="1.2" fill="#a8a0a0" opacity="0.6"/><rect x="28.7" y="79.4" width="19.8" height="4.5" fill="#bdbdbd" opacity="0.45"/><rect x="28.7" y="67" width="19.8" height="9" fill="#dadada"/><path d="M28.7 67.2H48.5L45.5 73.8H31.7Z" fill="#161616"/><path d="M30.2 67.2L38.6 74.2L47 67.2" stroke="#d8d8d8" stroke-width="1.2" fill="none"/><rect x="29.2" y="75.4" width="18.4" height="4" fill="#121212"/><rect x="35" y="61" width="1.7" height="7.5" fill="#eaeaea"/><rect x="39.3" y="61" width="1.7" height="7.5" fill="#eaeaea"/><rect x="36" y="67.3" width="4.5" height="2.6" fill="#fbfbfb"/><rect x="20.5" y="81.8" width="7.8" height="2.3" fill="#111"/><rect x="49" y="81.8" width="7.8" height="2.3" fill="#111"/><path d="M57.7 61L61.5 62.5V84.5L57.5 86.5Z" fill="#000" opacity="0.2"/><rect x="20" y="84" width="38" height="2" fill="#000" opacity="0.08"/></svg>
<svg class="a" style="left:806px;top:251px;overflow:visible" width="77" height="78" viewBox="0 0 77 78"><rect x="0.6" y="0.6" width="75.8" height="76.8" fill="#f7dd17" stroke="#0a0a0a" stroke-width="1.2"/><rect x="1.2" y="57" width="74.6" height="20.2" fill="#ff5a00"/><rect x="1.2" y="56.5" width="74.6" height="1.1" fill="#1a1a1a" opacity="0.3"/><path d="M2.9 44.3 Q8 40.2 13.1 44.3" stroke="#6a6a30" stroke-width="1.1" fill="none"/><path d="M5 46.2 Q8 43.7 11 46.2" stroke="#6a6a30" stroke-width="1.1" fill="none"/><circle cx="8" cy="48" r="1.2" fill="#6a6a30"/><rect x="64" y="34" width="9" height="18" fill="#1a1a1a"/><circle cx="68.5" cy="38.6" r="3" fill="#3a1515"/><circle cx="68.5" cy="47.4" r="3.1" fill="#1ed21e"/><path d="M17 17H60V57H17Z" fill="#050505"/><rect x="24" y="25" width="29" height="31.5" fill="#fbfbfb"/><rect x="24" y="25" width="29" height="31.5" fill="url(#gL)"/><rect x="24" y="25" width="29" height="31.5" fill="url(#gT)"/><rect x="26" y="45.6" width="5" height="2.6" fill="#2a2a2a"/><rect x="32.8" y="45.6" width="5" height="2.6" fill="#2a2a2a"/><rect x="39.6" y="45.6" width="5" height="2.6" fill="#2a2a2a"/><rect x="46.4" y="45.6" width="5" height="2.6" fill="#2a2a2a"/><rect x="25" y="49" width="28" height="8" fill="#d9cdcd"/><rect x="25" y="57" width="28" height="5" fill="#f0ecec"/><rect x="22.5" y="48" width="4.8" height="14" fill="#f0ea50"/><rect x="50" y="48" width="4.8" height="14" fill="#f0ea50"/><rect x="31" y="66" width="15" height="11.5" fill="#050505"/><rect x="37.6" y="64.5" width="2.2" height="6" fill="#cfcfcf"/></svg>
<svg class="a" style="left:890px;top:251px;overflow:visible" width="77" height="78" viewBox="0 0 77 78"><rect x="0.6" y="0.6" width="75.8" height="76.8" fill="#cfd1d6" stroke="#0a0a0a" stroke-width="1.2"/><rect x="1.2" y="57" width="74.6" height="20.2" fill="#a7a7a7"/><rect x="1.2" y="56.5" width="74.6" height="1.1" fill="#1a1a1a" opacity="0.85"/><path d="M2.9 44.3 Q8 40.2 13.1 44.3" stroke="#5a5a5a" stroke-width="1.1" fill="none"/><path d="M5 46.2 Q8 43.7 11 46.2" stroke="#5a5a5a" stroke-width="1.1" fill="none"/><circle cx="8" cy="48" r="1.2" fill="#5a5a5a"/><rect x="64" y="34" width="9" height="18" fill="#1a1a1a"/><circle cx="68.5" cy="38.6" r="3" fill="#ff1010"/><circle cx="68.5" cy="47.4" r="3.1" fill="#173a1a"/><path d="M17 17H60V57H57V63H20V57H17Z" fill="#050505"/><rect x="24" y="25" width="29" height="31.5" fill="#fbfbfb"/><rect x="24" y="25" width="29" height="31.5" fill="url(#gL)"/><rect x="24" y="25" width="29" height="31.5" fill="url(#gT)"/><rect x="26" y="45.6" width="5" height="2.6" fill="#2a2a2a"/><rect x="32.8" y="45.6" width="5" height="2.6" fill="#2a2a2a"/><rect x="39.6" y="45.6" width="5" height="2.6" fill="#2a2a2a"/><rect x="46.4" y="45.6" width="5" height="2.6" fill="#2a2a2a"/><path d="M38.5 40.5L47 56H30Z" fill="#f36a1c"/><path d="M35.9 45.5H41.1L42.3 48.6H34.7Z" fill="#fff"/><rect x="28.5" y="55" width="20" height="2" fill="#e95f10"/><rect x="31" y="66" width="15" height="11.5" fill="#050505"/><rect x="37.6" y="64.5" width="2.2" height="6" fill="#cfcfcf"/></svg>
<div class="a" style="left:50px;top:340px;width:76px;height:15px;border-radius:3px;background:#d20a36;color:#fff;font-size:9.7px;font-weight:700;text-align:center;line-height:15px;-webkit-text-stroke:0.3px #fff">48:22</div>
<div class="a" style="left:50px;top:364px;width:76px;height:35px;border-radius:3px;background:#fff;box-shadow:0 2px 3px rgba(0,0,0,0.28), 0 0 1px rgba(0,0,0,0.2)"></div><div class="t" style="left:-62px;width:300px;text-align:center;top:366.06px;font-size:9.9px;font-weight:700;color:#4a5262;letter-spacing:-0.1px;">#Z-6224</div><div class="t" style="left:-62px;width:300px;text-align:center;top:381.74px;font-size:9.6px;font-weight:700;color:#4a5262;letter-spacing:-0.1px;">NXPL</div>
<div class="a" style="left:134px;top:340px;width:76px;height:15px;border-radius:3px;background:#d20a36;color:#fff;font-size:9.7px;font-weight:700;text-align:center;line-height:15px;-webkit-text-stroke:0.3px #fff">47:16</div>
<div class="a" style="left:134px;top:364px;width:76px;height:35px;border-radius:3px;background:#fff;box-shadow:0 2px 3px rgba(0,0,0,0.28), 0 0 1px rgba(0,0,0,0.2)"></div><div class="t" style="left:22px;width:300px;text-align:center;top:366.06px;font-size:9.9px;font-weight:700;color:#4a5262;letter-spacing:-0.1px;">#I-666</div><div class="t" style="left:22px;width:300px;text-align:center;top:381.74px;font-size:9.6px;font-weight:700;color:#4a5262;letter-spacing:-0.1px;">PECH</div>
<div class="a" style="left:302px;top:340px;width:76px;height:15px;border-radius:3px;background:#d20a36;color:#fff;font-size:9.7px;font-weight:700;text-align:center;line-height:15px;-webkit-text-stroke:0.3px #fff">47:37</div>
<div class="a" style="left:302px;top:364px;width:76px;height:35px;border-radius:3px;background:#fff;box-shadow:0 2px 3px rgba(0,0,0,0.28), 0 0 1px rgba(0,0,0,0.2)"></div><div class="t" style="left:190px;width:300px;text-align:center;top:366.06px;font-size:9.9px;font-weight:700;color:#4a5262;letter-spacing:-0.1px;">#U-014</div><div class="t" style="left:190px;width:300px;text-align:center;top:381.74px;font-size:9.6px;font-weight:700;color:#4a5262;letter-spacing:-0.1px;">PECH</div>
<div class="a" style="left:470px;top:340px;width:76px;height:15px;border-radius:3px;background:#d20a36;color:#fff;font-size:9.7px;font-weight:700;text-align:center;line-height:15px;-webkit-text-stroke:0.3px #fff">48:05</div>
<div class="a" style="left:470px;top:364px;width:76px;height:35px;border-radius:3px;background:#fff;box-shadow:0 2px 3px rgba(0,0,0,0.28), 0 0 1px rgba(0,0,0,0.2)"></div><div class="t" style="left:358px;width:300px;text-align:center;top:366.06px;font-size:9.9px;font-weight:700;color:#4a5262;letter-spacing:-0.1px;">#W1-53113</div><div class="t" style="left:358px;width:300px;text-align:center;top:381.74px;font-size:9.6px;font-weight:700;color:#4a5262;letter-spacing:-0.1px;">UPSN</div>
<div class="a" style="left:554px;top:340px;width:76px;height:15px;border-radius:3px;background:#c8c8c8;color:#4a5262;font-size:10.3px;font-weight:700;text-align:center;line-height:15px">Pallet</div>
<div class="a" style="left:638px;top:340px;width:76px;height:15px;border-radius:3px;background:#d20a36;color:#fff;font-size:9.7px;font-weight:700;text-align:center;line-height:15px;-webkit-text-stroke:0.3px #fff">48:46</div>
<div class="a" style="left:638px;top:364px;width:76px;height:35px;border-radius:3px;background:#fff;box-shadow:0 2px 3px rgba(0,0,0,0.28), 0 0 1px rgba(0,0,0,0.2)"></div><div class="t" style="left:526px;width:300px;text-align:center;top:366.06px;font-size:9.9px;font-weight:700;color:#4a5262;letter-spacing:-0.1px;">#Z8-9810</div><div class="t" style="left:526px;width:300px;text-align:center;top:381.74px;font-size:9.6px;font-weight:700;color:#4a5262;letter-spacing:-0.1px;">8CON</div>
<div class="a" style="left:722px;top:340px;width:76px;height:15px;border-radius:3px;background:#d20a36;color:#fff;font-size:9.7px;font-weight:700;text-align:center;line-height:15px;-webkit-text-stroke:0.3px #fff">46:38</div>
<div class="a" style="left:722px;top:363.5px;width:76px;height:17px;border-radius:3px;background:#fff;box-shadow:0 2px 3px rgba(0,0,0,0.25), 0 0 1px rgba(0,0,0,0.2)"></div><svg class="a" style="left:722.5px;top:364.1px" width="13" height="13"><circle cx="6.5" cy="6.5" r="6" fill="#2ea3e3"/><path d="M6.5 3.5V9.5M3.5 6.5H9.5" stroke="#fff" stroke-width="1.5"/></svg><div class="t" style="left:739px;top:365.34px;font-size:9.6px;font-weight:400;color:#4f5663;letter-spacing:0px;">Load Details</div>
<svg class="a" style="left:50px;top:452px;overflow:visible" width="77" height="78" viewBox="0 0 77 78"><rect x="0.6" y="0.6" width="75.8" height="76.8" fill="#cfd1d6" stroke="#0a0a0a" stroke-width="1.2"/><rect x="1.2" y="57" width="74.6" height="20.2" fill="#a7a7a7"/><rect x="1.2" y="56.5" width="74.6" height="1.1" fill="#1a1a1a" opacity="0.85"/><circle cx="8.2" cy="33.5" r="1.5" fill="#2f86dd"/><path d="M2.9 44.3 Q8 40.2 13.1 44.3" stroke="#5a5a5a" stroke-width="1.1" fill="none"/><path d="M5 46.2 Q8 43.7 11 46.2" stroke="#5a5a5a" stroke-width="1.1" fill="none"/><circle cx="8" cy="48" r="1.2" fill="#5a5a5a"/><rect x="64" y="34" width="9" height="18" fill="#1a1a1a"/><circle cx="68.5" cy="38.6" r="3" fill="#ff1010"/><circle cx="68.5" cy="47.4" r="3.1" fill="#173a1a"/><path d="M69 25.8V20.6M66.6 23.2L69 20.6L71.4 23.2" stroke="#111" stroke-width="1.2" fill="none"/><path d="M65.6 65.5V64.3Q65.6 62 67.5 62Q69.4 62 69.4 64.3V65.5" stroke="#fff" stroke-width="1.4" fill="none"/><path d="M64.6 65H70.4Q71.4 65 71.6 66.2L72.1 70Q72.2 71.6 70.6 71.6H64.4Q62.8 71.6 62.9 70L63.4 66.2Q63.6 65 64.6 65Z" fill="#fff"/><rect x="17" y="17" width="43" height="41" fill="#050505"/><rect x="18.8" y="18.8" width="39.4" height="42" fill="#959595"/><rect x="20.5" y="20.5" width="36" height="39" fill="#858585"/><rect x="23" y="23" width="31" height="35" fill="#7a7a7a"/><rect x="19.5" y="59.8" width="38.2" height="9.5" fill="#d3cfc9"/><rect x="19.5" y="59.8" width="38.2" height="1.2" fill="#bdbab5"/><rect x="20.5" y="65.5" width="7" height="3.2" fill="#9e7474" opacity="0.75"/><rect x="49.5" y="65.5" width="7" height="3.2" fill="#9e7474" opacity="0.75"/><rect x="20" y="69" width="8.7" height="13" fill="#d8d4ce"/><rect x="48.5" y="69" width="8.8" height="13" fill="#d8d4ce"/><rect x="21" y="72" width="6" height="2" fill="#b0a0a0" opacity="0.7"/><rect x="50" y="72" width="6" height="2" fill="#b0a0a0" opacity="0.7"/><rect x="21" y="75.5" width="6" height="1.2" fill="#a8a0a0" opacity="0.6"/><rect x="50" y="75.5" width="6" height="1.2" fill="#a8a0a0" opacity="0.6"/><rect x="28.7" y="79.4" width="19.8" height="4.5" fill="#bdbdbd" opacity="0.45"/><rect x="28.7" y="67" width="19.8" height="9" fill="#dadada"/><path d="M28.7 67.2H48.5L45.5 73.8H31.7Z" fill="#161616"/><path d="M30.2 67.2L38.6 74.2L47 67.2" stroke="#d8d8d8" stroke-width="1.2" fill="none"/><rect x="29.2" y="75.4" width="18.4" height="4" fill="#121212"/><rect x="35" y="61" width="1.7" height="7.5" fill="#eaeaea"/><rect x="39.3" y="61" width="1.7" height="7.5" fill="#eaeaea"/><rect x="36" y="67.3" width="4.5" height="2.6" fill="#fbfbfb"/><rect x="20.5" y="81.8" width="7.8" height="2.3" fill="#111"/><rect x="49" y="81.8" width="7.8" height="2.3" fill="#111"/><path d="M57.7 61L61.5 62.5V84.5L57.5 86.5Z" fill="#000" opacity="0.2"/><rect x="20" y="84" width="38" height="2" fill="#000" opacity="0.08"/></svg>
<svg class="a" style="left:134px;top:452px;overflow:visible" width="77" height="78" viewBox="0 0 77 78"><rect x="0.6" y="0.6" width="75.8" height="76.8" fill="#cfd1d6" stroke="#0a0a0a" stroke-width="1.2"/><rect x="1.2" y="57" width="74.6" height="20.2" fill="#a7a7a7"/><rect x="1.2" y="56.5" width="74.6" height="1.1" fill="#1a1a1a" opacity="0.85"/><circle cx="8.2" cy="33.5" r="1.5" fill="#2f86dd"/><path d="M2.9 44.3 Q8 40.2 13.1 44.3" stroke="#5a5a5a" stroke-width="1.1" fill="none"/><path d="M5 46.2 Q8 43.7 11 46.2" stroke="#5a5a5a" stroke-width="1.1" fill="none"/><circle cx="8" cy="48" r="1.2" fill="#5a5a5a"/><rect x="64" y="34" width="9" height="18" fill="#1a1a1a"/><circle cx="68.5" cy="38.6" r="3" fill="#3a1515"/><circle cx="68.5" cy="47.4" r="3.1" fill="#1ed21e"/><path d="M17 17H60V57H57V62H20V57H17Z" fill="#050505"/><rect x="24" y="25" width="29" height="31.5" fill="#fbfbfb"/><rect x="24" y="25" width="29" height="31.5" fill="url(#gL)"/><rect x="24" y="25" width="29" height="31.5" fill="url(#gT)"/><rect x="26" y="45.6" width="5" height="2.6" fill="#2a2a2a"/><rect x="32.8" y="45.6" width="5" height="2.6" fill="#2a2a2a"/><rect x="39.6" y="45.6" width="5" height="2.6" fill="#2a2a2a"/><rect x="46.4" y="45.6" width="5" height="2.6" fill="#2a2a2a"/><rect x="31" y="66" width="15" height="11.5" fill="#050505"/><rect x="37.6" y="64.5" width="2.2" height="6" fill="#cfcfcf"/></svg>
<svg class="a" style="left:218px;top:452px;overflow:visible" width="77" height="78" viewBox="0 0 77 78"><rect x="0.6" y="0.6" width="75.8" height="76.8" fill="#f7dd17" stroke="#0a0a0a" stroke-width="1.2"/><rect x="1.2" y="57" width="74.6" height="20.2" fill="#ff5a00"/><rect x="1.2" y="56.5" width="74.6" height="1.1" fill="#1a1a1a" opacity="0.3"/><circle cx="8.2" cy="33.5" r="1.5" fill="#4a9a7a"/><path d="M2.9 44.3 Q8 40.2 13.1 44.3" stroke="#6a6a30" stroke-width="1.1" fill="none"/><path d="M5 46.2 Q8 43.7 11 46.2" stroke="#6a6a30" stroke-width="1.1" fill="none"/><circle cx="8" cy="48" r="1.2" fill="#6a6a30"/><rect x="64" y="34" width="9" height="18" fill="#1a1a1a"/><circle cx="68.5" cy="38.6" r="3" fill="#3a1515"/><circle cx="68.5" cy="47.4" r="3.1" fill="#1ed21e"/><path d="M17 17H60V57H57V62H20V57H17Z" fill="#050505"/><rect x="24" y="25" width="29" height="31.5" fill="#fbfbfb"/><rect x="24" y="25" width="29" height="31.5" fill="url(#gL)"/><rect x="24" y="25" width="29" height="31.5" fill="url(#gT)"/><rect x="26" y="45.6" width="5" height="2.6" fill="#2a2a2a"/><rect x="32.8" y="45.6" width="5" height="2.6" fill="#2a2a2a"/><rect x="39.6" y="45.6" width="5" height="2.6" fill="#2a2a2a"/><rect x="46.4" y="45.6" width="5" height="2.6" fill="#2a2a2a"/><rect x="31" y="66" width="15" height="11.5" fill="#050505"/><rect x="37.6" y="64.5" width="2.2" height="6" fill="#cfcfcf"/></svg>
<svg class="a" style="left:302px;top:452px;overflow:visible" width="77" height="78" viewBox="0 0 77 78"><rect x="0.6" y="0.6" width="75.8" height="76.8" fill="#cfd1d6" stroke="#0a0a0a" stroke-width="1.2"/><rect x="1.2" y="57" width="74.6" height="20.2" fill="#a7a7a7"/><rect x="1.2" y="56.5" width="74.6" height="1.1" fill="#1a1a1a" opacity="0.85"/><path d="M2.9 44.3 Q8 40.2 13.1 44.3" stroke="#5a5a5a" stroke-width="1.1" fill="none"/><path d="M5 46.2 Q8 43.7 11 46.2" stroke="#5a5a5a" stroke-width="1.1" fill="none"/><circle cx="8" cy="48" r="1.2" fill="#5a5a5a"/><rect x="64" y="34" width="9" height="18" fill="#1a1a1a"/><circle cx="68.5" cy="38.6" r="3" fill="#ff1010"/><circle cx="68.5" cy="47.4" r="3.1" fill="#173a1a"/><path d="M65.6 65.5V64.3Q65.6 62 67.5 62Q69.4 62 69.4 64.3V65.5" stroke="#fff" stroke-width="1.4" fill="none"/><path d="M64.6 65H70.4Q71.4 65 71.6 66.2L72.1 70Q72.2 71.6 70.6 71.6H64.4Q62.8 71.6 62.9 70L63.4 66.2Q63.6 65 64.6 65Z" fill="#fff"/><rect x="17" y="17" width="43" height="41" fill="#050505"/><rect x="18.8" y="18.8" width="39.4" height="42" fill="#959595"/><rect x="20.5" y="20.5" width="36" height="39" fill="#858585"/><rect x="23" y="23" width="31" height="35" fill="#7a7a7a"/><rect x="23" y="23" width="31" height="35" fill="#858585"/><rect x="32.3" y="28.9" width="11.9" height="13" fill="#1c1c1c"/><rect x="35" y="30.5" width="7" height="6.5" fill="#8a4a3c"/><circle cx="39.3" cy="31.5" r="1" fill="#d8c8c0"/><rect x="37.5" y="38" width="3" height="2.5" fill="#8a8a80"/><rect x="29.9" y="41.8" width="16.7" height="13.3" fill="#202020"/><rect x="35" y="43.7" width="6.8" height="1.4" fill="#8a8a8a"/><rect x="31.3" y="45.6" width="2.9" height="9.5" fill="#c8b040"/><rect x="42.8" y="45.6" width="2.9" height="9.5" fill="#c8b040"/><rect x="19.5" y="59.8" width="38.2" height="9.5" fill="#d3cfc9"/><rect x="19.5" y="59.8" width="38.2" height="1.2" fill="#bdbab5"/><rect x="20.5" y="65.5" width="7" height="3.2" fill="#9e7474" opacity="0.75"/><rect x="49.5" y="65.5" width="7" height="3.2" fill="#9e7474" opacity="0.75"/><rect x="20" y="69" width="8.7" height="13" fill="#d8d4ce"/><rect x="48.5" y="69" width="8.8" height="13" fill="#d8d4ce"/><rect x="21" y="72" width="6" height="2" fill="#b0a0a0" opacity="0.7"/><rect x="50" y="72" width="6" height="2" fill="#b0a0a0" opacity="0.7"/><rect x="21" y="75.5" width="6" height="1.2" fill="#a8a0a0" opacity="0.6"/><rect x="50" y="75.5" width="6" height="1.2" fill="#a8a0a0" opacity="0.6"/><rect x="28.7" y="79.4" width="19.8" height="4.5" fill="#bdbdbd" opacity="0.45"/><rect x="28.7" y="67" width="19.8" height="9" fill="#dadada"/><path d="M28.7 67.2H48.5L45.5 73.8H31.7Z" fill="#161616"/><path d="M30.2 67.2L38.6 74.2L47 67.2" stroke="#d8d8d8" stroke-width="1.2" fill="none"/><rect x="29.2" y="75.4" width="18.4" height="4" fill="#121212"/><rect x="35" y="61" width="1.7" height="7.5" fill="#eaeaea"/><rect x="39.3" y="61" width="1.7" height="7.5" fill="#eaeaea"/><rect x="36" y="67.3" width="4.5" height="2.6" fill="#fbfbfb"/><rect x="20.5" y="81.8" width="7.8" height="2.3" fill="#111"/><rect x="49" y="81.8" width="7.8" height="2.3" fill="#111"/><path d="M57.7 61L61.5 62.5V84.5L57.5 86.5Z" fill="#000" opacity="0.2"/><rect x="20" y="84" width="38" height="2" fill="#000" opacity="0.08"/></svg>
<svg class="a" style="left:386px;top:452px;overflow:visible" width="77" height="78" viewBox="0 0 77 78"><rect x="0.6" y="0.6" width="75.8" height="76.8" fill="#cfd1d6" stroke="#0a0a0a" stroke-width="1.2"/><rect x="1.2" y="57" width="74.6" height="20.2" fill="#a7a7a7"/><rect x="1.2" y="56.5" width="74.6" height="1.1" fill="#1a1a1a" opacity="0.85"/><path d="M2.9 44.3 Q8 40.2 13.1 44.3" stroke="#5a5a5a" stroke-width="1.1" fill="none"/><path d="M5 46.2 Q8 43.7 11 46.2" stroke="#5a5a5a" stroke-width="1.1" fill="none"/><circle cx="8" cy="48" r="1.2" fill="#5a5a5a"/><rect x="64" y="34" width="9" height="18" fill="#1a1a1a"/><circle cx="68.5" cy="38.6" r="3" fill="#ff1010"/><circle cx="68.5" cy="47.4" r="3.1" fill="#173a1a"/><path d="M65.6 65.5V64.3Q65.6 62 67.5 62Q69.4 62 69.4 64.3V65.5" stroke="#fff" stroke-width="1.4" fill="none"/><path d="M64.6 65H70.4Q71.4 65 71.6 66.2L72.1 70Q72.2 71.6 70.6 71.6H64.4Q62.8 71.6 62.9 70L63.4 66.2Q63.6 65 64.6 65Z" fill="#fff"/><rect x="17" y="17" width="43" height="41" fill="#050505"/><rect x="18.8" y="18.8" width="39.4" height="42" fill="#eff1f4"/><rect x="18.8" y="18.8" width="39.4" height="2.5" fill="#9a9a9a"/><rect x="18.8" y="21.3" width="39.4" height="1.5" fill="#cfcfcf"/><rect x="22" y="25" width="10" height="31" rx="3" fill="none" stroke="#e2e4e8" stroke-width="0.8"/><rect x="44" y="25" width="11" height="31" rx="3" fill="none" stroke="#e2e4e8" stroke-width="0.8"/><rect x="34.2" y="19" width="1.7" height="46" fill="#8c8c8c"/><rect x="35.9" y="19" width="2.2" height="46" fill="#dcdcdc"/><rect x="38.1" y="19" width="1.7" height="46" fill="#8c8c8c"/><rect x="19" y="29" width="3" height="1" fill="#8a8a8a"/><rect x="55" y="29" width="3" height="1" fill="#8a8a8a"/><rect x="19" y="36" width="3" height="1" fill="#8a8a8a"/><rect x="55" y="36" width="3" height="1" fill="#8a8a8a"/><rect x="19" y="47.5" width="3" height="1" fill="#8a8a8a"/><rect x="55" y="47.5" width="3" height="1" fill="#8a8a8a"/><rect x="33" y="56" width="11" height="1.5" fill="#9a9a9a" opacity="0.6"/><rect x="19.5" y="59.8" width="38.2" height="9.5" fill="#d3cfc9"/><rect x="19.5" y="59.8" width="38.2" height="1.2" fill="#bdbab5"/><rect x="20.5" y="65.5" width="7" height="3.2" fill="#9e7474" opacity="0.75"/><rect x="49.5" y="65.5" width="7" height="3.2" fill="#9e7474" opacity="0.75"/><rect x="20" y="69" width="8.7" height="13" fill="#d8d4ce"/><rect x="48.5" y="69" width="8.8" height="13" fill="#d8d4ce"/><rect x="21" y="72" width="6" height="2" fill="#b0a0a0" opacity="0.7"/><rect x="50" y="72" width="6" height="2" fill="#b0a0a0" opacity="0.7"/><rect x="21" y="75.5" width="6" height="1.2" fill="#a8a0a0" opacity="0.6"/><rect x="50" y="75.5" width="6" height="1.2" fill="#a8a0a0" opacity="0.6"/><rect x="28.7" y="79.4" width="19.8" height="4.5" fill="#bdbdbd" opacity="0.45"/><rect x="28.7" y="67" width="19.8" height="9" fill="#dadada"/><path d="M28.7 67.2H48.5L45.5 73.8H31.7Z" fill="#161616"/><path d="M30.2 67.2L38.6 74.2L47 67.2" stroke="#d8d8d8" stroke-width="1.2" fill="none"/><rect x="29.2" y="75.4" width="18.4" height="4" fill="#121212"/><rect x="35" y="61" width="1.7" height="7.5" fill="#eaeaea"/><rect x="39.3" y="61" width="1.7" height="7.5" fill="#eaeaea"/><rect x="36" y="67.3" width="4.5" height="2.6" fill="#fbfbfb"/><rect x="20.5" y="81.8" width="7.8" height="2.3" fill="#111"/><rect x="49" y="81.8" width="7.8" height="2.3" fill="#111"/><path d="M57.7 61L61.5 62.5V84.5L57.5 86.5Z" fill="#000" opacity="0.2"/><rect x="20" y="84" width="38" height="2" fill="#000" opacity="0.08"/></svg>
<svg class="a" style="left:470px;top:452px;overflow:visible" width="77" height="78" viewBox="0 0 77 78"><rect x="0.6" y="0.6" width="75.8" height="76.8" fill="#cfd1d6" stroke="#0a0a0a" stroke-width="1.2"/><rect x="1.2" y="57" width="74.6" height="20.2" fill="#a7a7a7"/><rect x="1.2" y="56.5" width="74.6" height="1.1" fill="#1a1a1a" opacity="0.85"/><path d="M2.9 44.3 Q8 40.2 13.1 44.3" stroke="#5a5a5a" stroke-width="1.1" fill="none"/><path d="M5 46.2 Q8 43.7 11 46.2" stroke="#5a5a5a" stroke-width="1.1" fill="none"/><circle cx="8" cy="48" r="1.2" fill="#5a5a5a"/><rect x="64" y="34" width="9" height="18" fill="#1a1a1a"/><circle cx="68.5" cy="38.6" r="3" fill="#3a1515"/><circle cx="68.5" cy="47.4" r="3.1" fill="#1ed21e"/><path d="M17 17H60V57H57V62H20V57H17Z" fill="#050505"/><rect x="24" y="25" width="29" height="31.5" fill="#fbfbfb"/><rect x="24" y="25" width="29" height="31.5" fill="url(#gL)"/><rect x="24" y="25" width="29" height="31.5" fill="url(#gT)"/><rect x="26" y="45.6" width="5" height="2.6" fill="#2a2a2a"/><rect x="32.8" y="45.6" width="5" height="2.6" fill="#2a2a2a"/><rect x="39.6" y="45.6" width="5" height="2.6" fill="#2a2a2a"/><rect x="46.4" y="45.6" width="5" height="2.6" fill="#2a2a2a"/><circle cx="38.4" cy="68.4" r="5.8" fill="#d0d0d0" stroke="#050505" stroke-width="2.7"/><circle cx="38.4" cy="68.4" r="3" fill="none" stroke="#ececec" stroke-width="1.3" stroke-dasharray="1.6 0.8"/><circle cx="38.4" cy="68.4" r="1.5" fill="#3a3a3a"/></svg>
<svg class="a" style="left:554px;top:452px;overflow:visible" width="77" height="78" viewBox="0 0 77 78"><rect x="0.6" y="0.6" width="75.8" height="76.8" fill="#cfd1d6" stroke="#0a0a0a" stroke-width="1.2"/><rect x="1.2" y="57" width="74.6" height="20.2" fill="#a7a7a7"/><rect x="1.2" y="56.5" width="74.6" height="1.1" fill="#1a1a1a" opacity="0.85"/><path d="M2.9 44.3 Q8 40.2 13.1 44.3" stroke="#5a5a5a" stroke-width="1.1" fill="none"/><path d="M5 46.2 Q8 43.7 11 46.2" stroke="#5a5a5a" stroke-width="1.1" fill="none"/><circle cx="8" cy="48" r="1.2" fill="#5a5a5a"/><rect x="64" y="34" width="9" height="18" fill="#1a1a1a"/><circle cx="68.5" cy="38.6" r="3" fill="#3a1515"/><circle cx="68.5" cy="47.4" r="3.1" fill="#1ed21e"/><path d="M17 17H60V57H57V62H20V57H17Z" fill="#050505"/><rect x="24" y="25" width="29" height="31.5" fill="#fbfbfb"/><rect x="24" y="25" width="29" height="31.5" fill="url(#gL)"/><rect x="24" y="25" width="29" height="31.5" fill="url(#gT)"/><rect x="26" y="45.6" width="5" height="2.6" fill="#2a2a2a"/><rect x="32.8" y="45.6" width="5" height="2.6" fill="#2a2a2a"/><rect x="39.6" y="45.6" width="5" height="2.6" fill="#2a2a2a"/><rect x="46.4" y="45.6" width="5" height="2.6" fill="#2a2a2a"/><circle cx="38.4" cy="68.4" r="5.8" fill="#d0d0d0" stroke="#050505" stroke-width="2.7"/><circle cx="38.4" cy="68.4" r="3" fill="none" stroke="#ececec" stroke-width="1.3" stroke-dasharray="1.6 0.8"/><circle cx="38.4" cy="68.4" r="1.5" fill="#3a3a3a"/></svg>
<div class="a" style="left:50px;top:541px;width:76px;height:15px;border-radius:3px;background:#c8c8c8;color:#4a5262;font-size:10.3px;font-weight:700;text-align:center;line-height:15px">Scrap</div>
<div class="a" style="left:302px;top:541px;width:76px;height:15px;border-radius:3px;background:#d20a36;color:#fff;font-size:9.7px;font-weight:700;text-align:center;line-height:15px;-webkit-text-stroke:0.3px #fff">48:34</div>
<div class="a" style="left:302px;top:565px;width:76px;height:35px;border-radius:3px;background:#fff;box-shadow:0 2px 3px rgba(0,0,0,0.28), 0 0 1px rgba(0,0,0,0.2)"></div><div class="t" style="left:190px;width:300px;text-align:center;top:567.06px;font-size:9.9px;font-weight:700;color:#4a5262;letter-spacing:-0.1px;">#2-26692</div><div class="t" style="left:190px;width:300px;text-align:center;top:582.74px;font-size:9.6px;font-weight:700;color:#4a5262;letter-spacing:-0.1px;">UPSS</div>
<div class="a" style="left:386px;top:541px;width:76px;height:15px;border-radius:3px;background:#d20a36;color:#fff;font-size:9.7px;font-weight:700;text-align:center;line-height:15px;-webkit-text-stroke:0.3px #fff">47:03</div>
<div class="a" style="left:386px;top:564.5px;width:76px;height:17px;border-radius:3px;background:#fff;box-shadow:0 2px 3px rgba(0,0,0,0.25), 0 0 1px rgba(0,0,0,0.2)"></div><svg class="a" style="left:386.5px;top:565.1px" width="13" height="13"><circle cx="6.5" cy="6.5" r="6" fill="#2ea3e3"/><path d="M6.5 3.5V9.5M3.5 6.5H9.5" stroke="#fff" stroke-width="1.5"/></svg><div class="t" style="left:403px;top:566.34px;font-size:9.6px;font-weight:400;color:#4f5663;letter-spacing:0px;">Load Details</div>
<div class="a" style="left:1035px;top:43px;width:1px;height:847px;background:#7a7a7a"></div>
<div class="a" style="left:1036px;top:43px;width:404px;height:35px;background:#f6dd16;border-bottom:1px solid #a99a40"></div>
<div class="t" style="left:1044px;top:55.94px;font-size:10.1px;font-weight:700;color:#3f4550;letter-spacing:-0.05px;">SAFETY ANALYSIS</div>
<svg class="a" style="left:1425.5px;top:57.4px" width="7" height="7"><path d="M0.6 0.6L6.4 6.4M6.4 0.6L0.6 6.4" stroke="#333" stroke-width="1.5"/></svg>
<div class="a" style="left:1440px;top:43px;width:14px;height:847px;background:#f8f8f8"></div>
<svg class="a" style="left:1443.5px;top:49px" width="8" height="5"><path d="M0 5H8L4 0Z" fill="#9a9a9a"/></svg>
<div class="a" style="left:1443px;top:61px;width:9px;height:772px;border-radius:5px;background:#8c8c8c"></div>
<svg class="a" style="left:1443.5px;top:877px" width="8" height="5"><path d="M0 0H8L4.0 5Z" fill="#9a9a9a"/></svg>
<div class="a" style="left:1045px;top:113px;width:387px;height:735px;border:1px solid #e6e6e6;border-top-color:#e0e0e0"></div>
<div class="a" style="left:1045px;top:87px;width:70px;height:27px;border:1px solid #e0e0e0;border-bottom:none;background:#fff"></div>
<div class="t" style="left:1054px;top:93.89px;font-size:9.35px;font-weight:400;color:#4a4f58;letter-spacing:0px;">Asset Group</div>
<div class="t" style="left:1127px;top:93.89px;font-size:9.35px;font-weight:400;color:#4a4f58;letter-spacing:0px;">Safety Event</div>
<div class="a" style="left:1057px;top:126px;width:362px;height:629px;border:1px solid #e8e8e8;background:#fff"></div>
<div class="t" style="left:1070px;top:137.54px;font-size:9.1px;font-weight:700;color:#3f4858;letter-spacing:0px;">DOCK 01</div>
<div class="a" style="left:1371.0px;top:136.0px;width:15px;height:15px;border-radius:50%;background:#2b2b2b;color:#fff;font-size:8px;font-weight:700;text-align:center;line-height:15px">1</div>
<svg class="a" style="left:1394.5px;top:137px" width="12" height="12" viewBox="1394.5 137 12 12"><path d="M1397.1 144.9L1400.5 141.5L1403.9 144.9" stroke="#3a3a3a" stroke-width="1.3" fill="none"/></svg>
<div class="a" style="left:1070px;top:173px;width:335px;height:551px;border:1px solid #e6cf3a;border-radius:4px;background:#fff"></div>
<div class="a" style="left:1071px;top:174px;width:335px;height:74px;background:#f6dd16;border-radius:3px 3px 0 0"></div>
<div class="t" style="left:1083px;top:186.98px;font-size:9.2px;font-weight:700;color:#3a3a30;letter-spacing:0px;">Excessive Door Open</div>
<div class="t" style="left:1083px;top:209.87px;font-size:8.55px;font-weight:400;color:#4a4a30;letter-spacing:0px;">Potential for equipment/personnel falling off dock / OSHA violation (no fall-off</div>
<div class="t" style="left:1083px;top:222.87px;font-size:8.55px;font-weight:400;color:#4a4a30;letter-spacing:0px;">protection)</div>
<div class="t" style="left:1084px;top:259.54px;font-size:9.1px;font-weight:700;color:#3f4858;letter-spacing:0px;">RISK</div>
<svg class="a" style="left:1380.5px;top:259.5px" width="12" height="12" viewBox="1380.5 259.5 12 12"><path d="M1383.1 267.4L1386.5 264.0L1389.9 267.4" stroke="#3a3a3a" stroke-width="1.3" fill="none"/></svg>
<div class="t" style="left:1084px;top:296.54px;font-size:9.1px;font-weight:400;color:#4f545c;letter-spacing:0px;">Excessive Door Open</div>
<div class="t" style="left:1084px;top:310.82px;font-size:8.3px;font-weight:400;color:#4f545c;letter-spacing:0px;">Convenience Issue (another trailer coming soon, quick delivery UPS etc.)</div>
<div class="t" style="left:1084px;top:331.48px;font-size:9.2px;font-weight:400;color:#4f545c;letter-spacing:0px;">Multiple Shifts, Multiple Docks</div>
<div class="t" style="left:1091px;top:345.77px;font-size:9.55px;font-weight:400;color:#4f545c;letter-spacing:0px;">Occurred 20 times (last 30 days)</div>
<svg class="a" style="left:1100px;top:370px" width="300" height="120">
<circle cx="160" cy="65.6" r="37.5" fill="#9a9a9a"/>
<path d="M160 65.6V28.1A37.5 37.5 0 0 1 171.2 101.4Z" fill="#ababab"/>
<path d="M160 28.1V17H171" stroke="#c8c8c8" stroke-width="1" fill="none"/>
<path d="M197.5 61Q208 58 220 58" stroke="#c8c8c8" stroke-width="1" fill="none"/>
<path d="M100 73Q112 73 123 71" stroke="#c8c8c8" stroke-width="1" fill="none"/>
</svg>
<div class="t" style="left:1275.5px;top:380.56px;font-size:9.9px;font-weight:400;color:#4a4a4a;letter-spacing:-0.1px;">12am - 8am</div>
<div class="t" style="left:1323.5px;top:422.06px;font-size:9.9px;font-weight:400;color:#4a4a4a;letter-spacing:-0.1px;">8am - 4pm</div>
<div class="t" style="left:1128px;top:436.56px;font-size:9.9px;font-weight:400;color:#4a4a4a;letter-spacing:0.1px;">4pm - Midnight</div>
<div class="t" style="left:1091px;top:512.27px;font-size:9.55px;font-weight:400;color:#4f545c;letter-spacing:-0.05px;">Occurred on 2 Docks (last 30 days)</div>
<svg class="a" style="left:1100px;top:540px" width="300" height="120">
<circle cx="160" cy="61" r="37.4" fill="#acacac"/>
<path d="M160 61V23.6A37.4 37.4 0 0 1 170.5 96.9Z" fill="#c5c5c5"/>
<path d="M197.4 55Q208 53 220 53" stroke="#c8c8c8" stroke-width="1" fill="none"/>
<path d="M100 68Q112 68 122.7 66" stroke="#c8c8c8" stroke-width="1" fill="none"/>
</svg>
<div class="t" style="left:1323.5px;top:587.06px;font-size:9.9px;font-weight:400;color:#4a4a4a;letter-spacing:0px;">01</div>
<div class="t" style="left:1186.5px;top:601.56px;font-size:9.9px;font-weight:400;color:#4a4a4a;letter-spacing:0px;">13</div>
<div class="a" style="left:1071px;top:689px;width:335px;height:1px;background:#e8e8e8"></div>
<div class="t" style="left:1084px;top:700.54px;font-size:9.1px;font-weight:700;color:#3f4858;letter-spacing:0px;">TROUBLESHOOT</div>
<svg class="a" style="left:1380.5px;top:700px" width="12" height="12" viewBox="1380.5 700 12 12"><path d="M1383.1 704.5L1386.5 707.9L1389.9 704.5" stroke="#3a3a3a" stroke-width="1.3" fill="none"/></svg>
<div class="a" style="left:1057px;top:760px;width:362px;height:33px;border:1px solid #e8e8e8;background:#fff"></div>
<div class="t" style="left:1070px;top:771.54px;font-size:9.1px;font-weight:700;color:#3f4858;letter-spacing:0px;">DOCK 13</div>
<div class="a" style="left:1371.0px;top:770.0px;width:15px;height:15px;border-radius:50%;background:#2b2b2b;color:#fff;font-size:8px;font-weight:700;text-align:center;line-height:15px">1</div>
<svg class="a" style="left:1394.5px;top:771.5px" width="12" height="12" viewBox="1394.5 771.5 12 12"><path d="M1397.1 776.0L1400.5 779.4L1403.9 776.0" stroke="#3a3a3a" stroke-width="1.3" fill="none"/></svg>
<div class="a" style="left:1057px;top:799px;width:362px;height:33px;border:1px solid #e8e8e8;background:#fff"></div>
<div class="t" style="left:1070px;top:810.54px;font-size:9.1px;font-weight:700;color:#3f4858;letter-spacing:0px;">DOCK 17</div>
<div class="a" style="left:1371.0px;top:809.0px;width:15px;height:15px;border-radius:50%;background:#2b2b2b;color:#fff;font-size:8px;font-weight:700;text-align:center;line-height:15px">1</div>
<svg class="a" style="left:1394.5px;top:810.5px" width="12" height="12" viewBox="1394.5 810.5 12 12"><path d="M1397.1 815.0L1400.5 818.4L1403.9 815.0" stroke="#3a3a3a" stroke-width="1.3" fill="none"/></svg>
<div class="a" style="left:1045px;top:854px;width:371px;height:50px;border:1px solid #e4e4e4;background:#fff"></div>
<div class="t" style="left:1058px;top:864.92px;font-size:9.3px;font-weight:700;color:#3f4858;letter-spacing:0px;">TRAINING OPPORTUNITIES</div>
<svg class="a" style="left:1391.5px;top:865px" width="12" height="12" viewBox="1391.5 865 12 12"><path d="M1394.1 869.5L1397.5 872.9L1400.9 869.5" stroke="#3a3a3a" stroke-width="1.3" fill="none"/></svg>
<div class="a" style="left:0;top:890px;width:1454px;height:30px;background:#fff;border-top:1px solid #8a8a8a"></div>
<div class="t" style="left:20px;top:899.74px;font-size:9.6px;font-weight:400;color:#4a4f58;letter-spacing:0px;">By using this software, you agree to the <span style="color:#b0184a">Terms of Use</span>, <span style="color:#b0184a">Privacy Policy</span> and <span style="color:#b0184a">Cookie Policy</span> | v25.03 © 2025 Rite-Hite</div>
<div class="a" style="left:0;top:920px;width:1454px;height:4px;background:#1c3236"></div>
<div class="a" style="left:37px;top:920px;width:343px;height:4px;background:#e6e6e6;border-top:1px solid #bbb;box-sizing:border-box"></div>
<div class="a" style="left:482px;top:920px;width:48px;height:4px;background:#5a6060"></div>
<div class="a" style="left:530px;top:920px;width:48px;height:4px;background:#a86a3a"></div>
</body></html>
